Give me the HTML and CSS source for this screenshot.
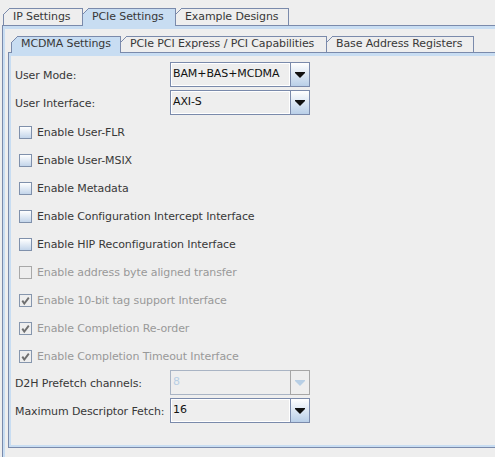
FILE: index.html
```html
<!DOCTYPE html>
<html>
<head>
<meta charset="utf-8">
<link rel="stylesheet" href="styles.css">
</head>
<body>
<div class="frame">
  <div class="tabrow outer-tabs">
    <div class="tab first w-ip">IP Settings</div>
    <div class="tab sel w-pcie">PCIe Settings</div>
    <div class="tab w-ex">Example Designs</div>
  </div>
  <div class="pane outer-pane">
    <div class="pane-body outer-body">
      <div class="tabrow inner-tabs">
        <div class="tab first sel w-mcdma">MCDMA Settings</div>
        <div class="tab w-cap">PCIe PCI Express / PCI Capabilities</div>
        <div class="tab w-bar">Base Address Registers</div>
      </div>
      <div class="pane inner-pane">
        <div class="pane-body form">
          <div class="field">
            <span class="label">User Mode:</span>
            <div class="combo">
              <div class="combo-value">BAM+BAS+MCDMA</div>
              <div class="combo-btn"><svg width="10" height="6" viewBox="0 0 10 6"><polygon points="0,0 10,0 10,1 5,6 0,1"/></svg></div>
            </div>
          </div>
          <div class="field">
            <span class="label">User Interface:</span>
            <div class="combo">
              <div class="combo-value">AXI-S</div>
              <div class="combo-btn"><svg width="10" height="6" viewBox="0 0 10 6"><polygon points="0,0 10,0 10,1 5,6 0,1"/></svg></div>
            </div>
          </div>
          <div class="check"><span class="box"></span>Enable User-FLR</div>
          <div class="check"><span class="box"></span>Enable User-MSIX</div>
          <div class="check"><span class="box"></span>Enable Metadata</div>
          <div class="check"><span class="box"></span>Enable Configuration Intercept Interface</div>
          <div class="check"><span class="box"></span>Enable HIP Reconfiguration Interface</div>
          <div class="check disabled"><span class="box"></span>Enable address byte aligned transfer</div>
          <div class="check disabled checked"><span class="box"><svg width="11" height="11" viewBox="0 0 11 11"><path d="M2.3 5.6 L4.3 8.6 L8.8 2.6"/></svg></span>Enable 10-bit tag support Interface</div>
          <div class="check disabled checked"><span class="box"><svg width="11" height="11" viewBox="0 0 11 11"><path d="M2.3 5.6 L4.3 8.6 L8.8 2.6"/></svg></span>Enable Completion Re-order</div>
          <div class="check disabled checked"><span class="box"><svg width="11" height="11" viewBox="0 0 11 11"><path d="M2.3 5.6 L4.3 8.6 L8.8 2.6"/></svg></span>Enable Completion Timeout Interface</div>
          <div class="field">
            <span class="label">D2H Prefetch channels:</span>
            <div class="combo disabled">
              <div class="combo-value">8</div>
              <div class="combo-btn"><svg width="10" height="6" viewBox="0 0 10 6"><polygon points="0,0 10,0 10,1 5,6 0,1"/></svg></div>
            </div>
          </div>
          <div class="field">
            <span class="label">Maximum Descriptor Fetch:</span>
            <div class="combo">
              <div class="combo-value">16</div>
              <div class="combo-btn"><svg width="10" height="6" viewBox="0 0 10 6"><polygon points="0,0 10,0 10,1 5,6 0,1"/></svg></div>
            </div>
          </div>
        </div>
      </div>
    </div>
  </div>
</div>
</body>
</html>
```

FILE: styles.css
```css
* { box-sizing: border-box; }

body {
  margin: 0;
  background: #eeeeee;
  font-family: "DejaVu Sans", sans-serif;
  font-size: 11px;
  letter-spacing: -0.1px;
  color: #383838;
  overflow: hidden;
}

.frame {
  width: 495px;
  height: 457px;
  padding-top: 8px;
}

.tabrow {
  display: flex;
  align-items: flex-start;
}

.outer-tabs {
  margin-left: 3px;
  height: 17px;
}

.tab {
  position: relative;
  height: 17px;
  border: 1px solid #7a8aab;
  border-bottom: none;
  padding-left: 9px;
  line-height: 15px;
  background: #eeeeee;
  white-space: nowrap;
}

.tab + .tab { margin-left: -1px; }

.tab::before {
  content: "";
  position: absolute;
  top: -1px;
  left: 0;
  width: 6px;
  height: 6px;
  background: linear-gradient(to bottom right, #eeeeee 0 calc(50% - 0.6px), #7a8aab calc(50% - 0.6px) calc(50% + 0.6px), transparent calc(50% + 0.6px));
}

.tab.first::before { left: -1px; width: 7px; height: 7px; }

.tab.sel {
  background: #c8ddf2;
  height: 18px;
  z-index: 1;
}

.w-ip { width: 80px; }
.w-pcie { width: 94px; }
.w-ex { width: 114px; }
.w-mcdma { width: 110px; }
.w-cap { width: 207px; }
.w-bar { width: 148px; }

.pane {
  border: 1px solid #7a8aab;
  border-right: none;
}

.outer-pane {
  margin-left: 2px;
  height: 440px;
}

.outer-body {
  border-style: solid;
  border-color: #c8ddf2;
  border-width: 3px 0 2px 2px;
  height: 100%;
}

.inner-tabs {
  margin-top: 7px;
  margin-left: 6px;
  height: 16px;
}

.inner-tabs .tab { height: 16px; line-height: 14px; }
.inner-tabs .tab.sel { height: 17px; }

.inner-pane {
  margin-left: 3px;
  height: 396px;
}

.form {
  border-style: solid;
  border-color: #c8ddf2;
  border-width: 3px 0 2px 2px;
  height: 100%;
  padding-top: 6px;
  display: flex;
  flex-direction: column;
}

.field {
  display: flex;
  align-items: center;
  height: 25px;
  margin-bottom: 3px;
  padding-left: 4px;
}

.label {
  width: 155px;
  padding-top: 2px;
}

.combo {
  display: flex;
  width: 140px;
  height: 25px;
}

.combo-value {
  width: 120px;
  border: 1px solid #7a8aab;
  border-right: none;
  box-shadow: inset 1px 1px 0 #ffffff, inset -1px -1px 0 #ffffff;
  background: #eeeeee;
  color: #111111;
  padding-left: 2px;
  line-height: 21px;
}

.combo-btn {
  width: 20px;
  border: 1px solid #7a8aab;
  background: linear-gradient(to bottom, #ffffff, #b9cfe8);
  display: flex;
  align-items: center;
  justify-content: center;
  padding-top: 1px;
}

.combo-btn svg { fill: #111111; }

.combo.disabled .combo-value {
  border-color: #a9b4c4;
  color: #b8cfe5;
  box-shadow: none;
}

.combo.disabled .combo-btn {
  border-color: #a6a6a6;
  background: #eeeeee;
}

.combo.disabled .combo-btn svg { fill: #b8cfe5; }

.check {
  display: flex;
  align-items: center;
  height: 28px;
  padding-left: 8px;
  padding-top: 1px;
}

.box {
  width: 13px;
  height: 13px;
  margin-right: 5px;
  border: 1px solid #7f90ab;
  background: linear-gradient(to bottom, #ffffff, #c3d5ea);
  display: flex;
  align-items: center;
  justify-content: center;
}

.check.disabled { color: #999999; }

.check.disabled .box {
  border-color: #a8a8a8;
  background: #eeeeee;
}

.check.disabled.checked .box {
  border-color: #8696ad;
}

.box svg path {
  fill: none;
  stroke: #6f6f6f;
  stroke-width: 1.9;
}
```
